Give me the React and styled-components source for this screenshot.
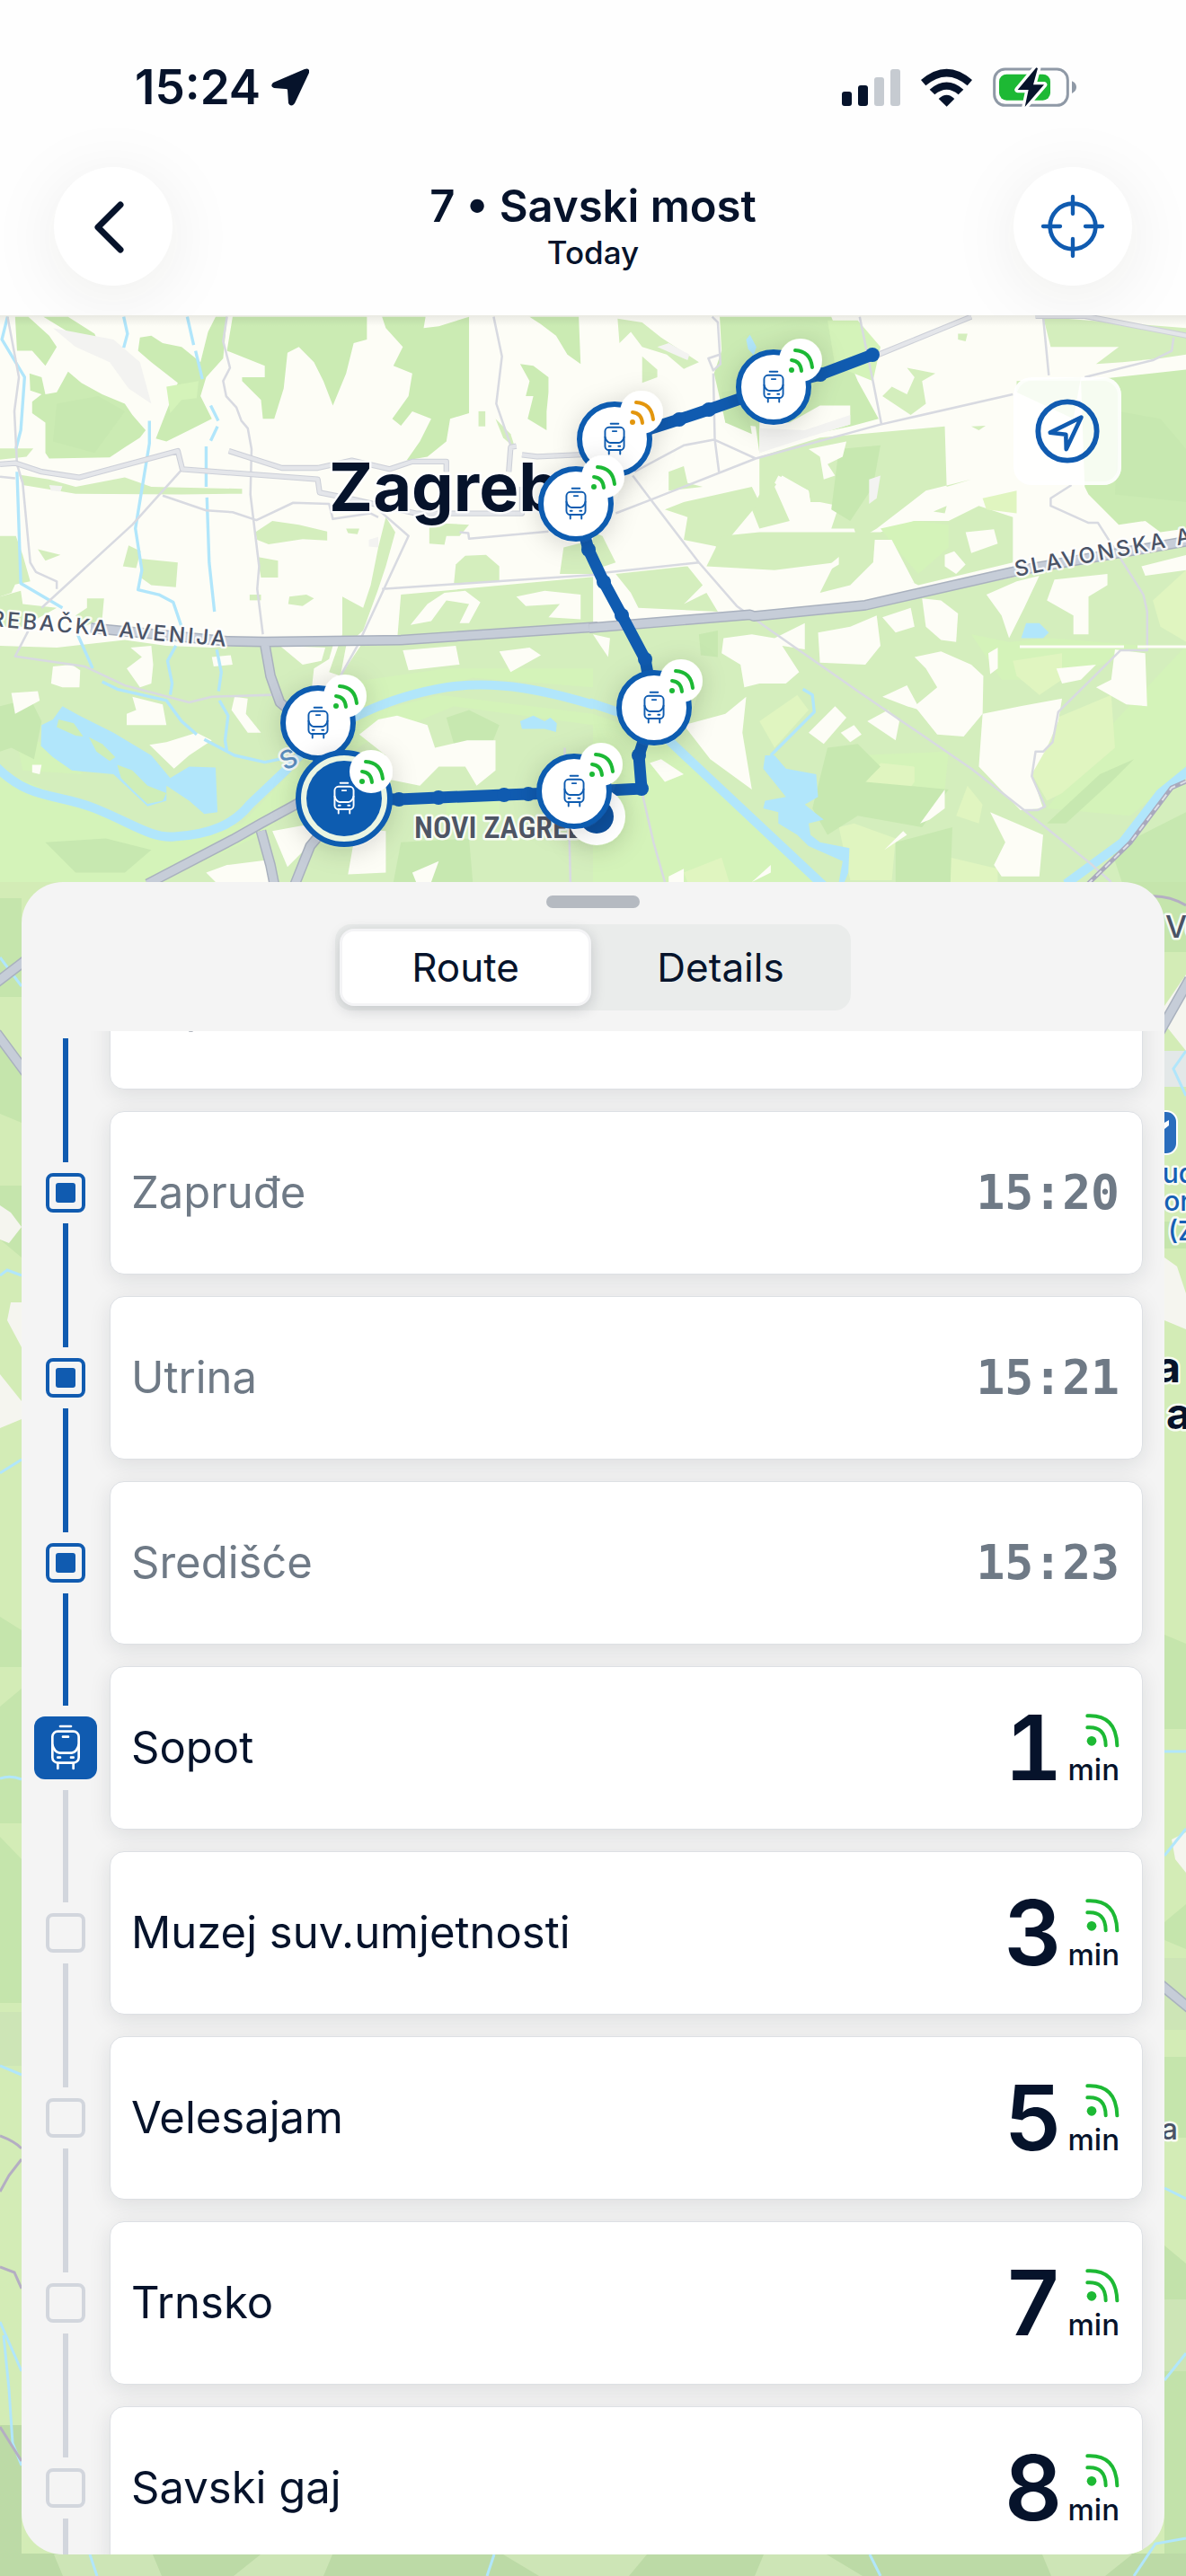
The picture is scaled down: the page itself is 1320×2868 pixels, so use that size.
import { useState } from "react";
import styled, { createGlobalStyle, css } from "styled-components";

const colors = {
  ink: "#06132b",
  muted: "#6f7a86",
  blue: "#105bb0",
  green: "#1db934",
  orange: "#e3960f",
  rail: "#d2d6dd",
  sheet: "#f4f4f4",
};

const stops = [
  { name: "Supilova", time: "15:19", state: "past" },
  { name: "Zapruđe", time: "15:20", state: "past" },
  { name: "Utrina", time: "15:21", state: "past" },
  { name: "Središće", time: "15:23", state: "past" },
  { name: "Sopot", minutes: 1, state: "current" },
  { name: "Muzej suv.umjetnosti", minutes: 3, state: "next" },
  { name: "Velesajam", minutes: 5, state: "next" },
  { name: "Trnsko", minutes: 7, state: "next" },
  { name: "Savski gaj", minutes: 8, state: "next" },
];

const trams = [
  { x: 861, y: 431, signal: colors.green },
  { x: 684, y: 489, signal: colors.orange },
  { x: 641, y: 561, signal: colors.green },
  { x: 728, y: 788, signal: colors.green },
  { x: 354, y: 805, signal: colors.green },
  { x: 639, y: 881, signal: colors.green },
  { x: 383, y: 889, signal: colors.green, selected: true },
];

const routePoints = [
  [971, 395], [913, 417], [861, 431], [789, 456], [756, 467], [684, 490],
  [641, 561], [655, 612], [672, 648], [692, 685], [718, 734], [728, 788],
  [711, 841], [714, 878], [639, 882], [588, 884], [561, 885], [488, 888],
  [444, 890], [383, 889], [355, 857], [354, 805],
];

// Terrain is split in two tiles, each drawn on its own 1568 unit grid
const westTile = {
  forest: [
    "40,30 75,30 130,80 150,110 120,160 85,120 45,120",
    "115,30 180,30 250,75 265,110 245,115 180,70",
    "180,175 215,205 270,235 330,260 350,290 385,330 370,350 330,375 290,402 130,405 120,390 120,310 85,285 85,255 110,235 80,225 78,180 110,190 120,235 150,230",
    "370,85 400,80 430,100 480,110 530,150 550,70 570,30 600,30 590,140 545,190 530,240 560,300 500,330 440,360 412,352 440,280 470,205 400,150 365,120",
    "615,30 970,30 970,90 935,100 915,180 880,265 855,200 830,150 790,110 760,125 750,220 725,300 695,300 690,250 640,200 640,190 700,190 700,160 600,120",
    "1010,30 1125,30 1120,60 1160,55 1240,30 1240,285 1190,300 1180,360 1130,400 1075,410 1110,360 1140,300 1090,280 1060,318 1037,300 1080,240 1090,180 1040,160 1065,110 1020,60",
    "1400,30 1530,30 1535,155 1500,130 1470,80 1430,50",
    "1375,155 1410,160 1450,190 1450,230 1445,280 1445,330 1395,300 1410,240 1390,240 1400,200",
  ],
  park: [
    "1265,280 1283,280 1283,320 1265,320",
    "1310,300 1350,340 1362,378 1330,350",
    "0,378 88,378 70,400 0,408",
    "50,448 130,460 200,480 330,455 400,480 640,485 640,498 480,500 200,498 60,475",
    "0,610 42,610 60,660 80,730 40,738 30,760 0,770",
    "370,670 470,680 465,745 400,740 372,720",
    "340,635 372,650 360,695 325,690",
    "100,645 160,660 120,675",
    "675,600 720,570 790,580 865,598 865,622 800,618 710,632 680,620",
    "915,590 950,590 945,605 920,602",
    "1020,560 1045,600 1020,690 1000,750 960,860 915,900 900,980 870,970 905,870 905,770 960,800 980,740 1000,640",
    "1135,575 1240,580 1215,610 1180,610 1175,633 1135,630",
    "1230,662 1285,660 1320,690 1320,730 1200,735 1205,685",
    "765,770 810,765 830,775 800,795 762,790",
    "680,665 735,675 735,720 690,720",
    "660,765 690,765 690,780 660,780",
    "230,775 275,775 270,830 220,850 200,820 230,800",
    "1490,640 1568,620 1568,710 1480,710",
    "0,770 55,755 60,790 150,800 60,850 0,850",
    "0,900 150,905 330,885 440,900 560,905 700,895 880,900 870,935 830,960 820,1050 870,1060 900,980 960,890 1568,845 1568,1568 0,1568",
    "1060,765 1568,718 1568,850 1050,885",
  ],
  meadow: [
    "0,1230 260,1340 450,1420 640,1370 900,1100 1160,1030 1568,1080 1568,1110 1200,1060 960,1160 690,1400 420,1525 0,1525",
    "900,1000 1180,960 1568,960 1568,1010 1250,985 960,1070",
    "40,1130 140,1170 220,1240 60,1230",
    "1180,1300 1320,1300 1320,1370 1180,1350",
    "440,215 525,200 520,245 480,250 450,285",
  ],
  grove: [
    "0,1060 80,1040 110,1100 90,1200 30,1170 0,1180",
    "1200,1160 1180,1090 1240,1070 1320,1110 1300,1160",
    "1060,1420 1240,1410 1250,1525 1040,1525",
    "120,1420 280,1410 400,1440 330,1500 200,1500",
    "150,260 260,240 330,280 250,390 140,360",
  ],
  clearing: [
    "140,955 190,950 212,965 210,1010 165,1010 135,1000",
    "345,905 400,900 405,950 400,1000 370,1010 335,960 375,930",
    "350,1035 430,1055 440,1110 335,1110 335,1080 360,1070",
    "395,1162 440,1155 520,1130 560,1150 500,1190 460,1225",
    "620,1035 655,1040 650,1080 690,1130 655,1130 612,1070",
    "30,1025 100,1020 105,1045 40,1080",
    "1065,912 1205,900 1215,950 1080,965",
    "1130,790 1175,760 1230,755 1270,785 1240,840 1215,840 1240,790 1180,780 1140,835 1085,845",
    "1365,770 1440,755 1535,765 1535,830 1450,825 1480,790 1390,795",
    "1320,915 1400,905 1430,925 1350,970",
    "950,1135 1000,1095 1050,1085 1130,1110 1150,1170 1235,1150 1310,1150 1310,1230 1260,1270 1230,1220 1160,1220 1110,1270 960,1240 1020,1190",
    "720,1390 830,1370 825,1420 760,1485",
    "545,1500 600,1480 720,1465 720,1525 570,1525",
    "890,1380 1020,1390 1020,1500 920,1505 935,1420",
    "1090,1500 1160,1470 1140,1525 1100,1525",
    "85,1215 110,1215 105,1240 85,1235",
    "560,930 610,925 615,950 565,955",
    "740,900 860,905 850,940 800,950",
  ],
  urban: [
    "140,60 300,90 370,150 400,260 340,220 290,150 200,110",
    "975,620 1000,612 1000,640 975,638",
    "130,475 165,478 160,492 135,490",
  ],
  water: [
    "165,1060 210,1085 300,1130 400,1190 450,1250 500,1220 570,1222 575,1340 540,1345 500,1310 440,1270 440,1310 390,1325 300,1240 190,1230 140,1195 108,1165 110,1110 140,1095",
    "1375,1100 1410,1085 1440,1100 1455,1090 1472,1105 1470,1128 1440,1120 1380,1120",
  ],
  island: [
    "155,1095 195,1105 220,1140 200,1138 150,1115",
    "235,1142 270,1160 305,1195 290,1205 255,1180",
    "310,1215 350,1230 390,1270 440,1290 430,1310 390,1318 350,1280 320,1250",
  ],
  streams:
    "M20,30L5,90L65,190L55,330L42,380M45,440L55,735L165,800M205,870L245,960M270,995L310,1015L440,1045L480,1100L520,1135M540,1148L620,1190L700,1208L740,1200M327,30L337,75L327,112M495,30L512,105M517,120L535,195M557,265L577,305M575,320L557,358M545,373V480M547,508L553,680L567,810M573,910L585,970L578,1020M580,1045L603,1085L595,1150L600,1180M395,305V365L358,590L375,700L365,752L420,765L458,785L480,850M465,900L443,940L455,1000L450,1030",
  rivers: "M-10,1220C80,1310 150,1290 250,1330C350,1370 400,1410 460,1405C560,1400 620,1370 660,1320L760,1225C850,1120 1000,1040 1180,1010C1320,990 1450,1020 1580,1060",
  lanes:
    "M20,30L50,190L38,280L45,420L60,470L80,680L95,705L150,730V750M480,435L350,580L110,800M600,30L590,95L608,165L590,200L598,240L625,270L638,305L655,325L665,380L662,500L685,690L680,750L695,870M430,503L545,542L615,547L678,568L775,522L870,525L880,565L980,550L1000,560M1305,30L1327,135L1312,260L1350,370M75,860L40,928L225,955L330,1005L500,1050L560,1035L720,1030M1000,540L1080,610L1015,750L945,900L900,980M1010,750L1580,712M1215,600L1238,602L1240,617L1450,598M0,453L40,457M1493,1170V1250M1505,1400L1508,1525",
  streets:
    "M0,420L40,417L110,440L210,455L470,385L482,433L840,460L845,495L920,510L1100,550L1380,550V480M605,385L745,430H840L930,410L1030,433L1090,413H1180V440M1380,395L1420,400L1580,393M1345,440L1350,375L1365,372",
  highways:
    "M240,853L600,888L700,890L1060,885L1580,850M700,895L715,980L740,1050L800,1100M390,1530L620,1410L690,1370L800,1310L850,1300M690,1390L715,1480L725,1530M780,1530L820,1430L870,1370",
};

const eastTile = {
  forest: [
    "335,30 630,30 700,200 755,300 680,320 560,345 440,390 430,320 350,310 320,180 340,120",
    "1290,200 1568,170 1568,590 1500,600 1460,570 1390,580 1310,500 1300,480",
  ],
  park: [
    "65,35 130,45 180,85 280,150 240,168 195,130 130,110 100,70 70,100",
    "130,135 170,170 170,190 130,205",
    "200,440 240,425 250,470 290,480 200,490",
    "1190,30 1568,60 1568,130 1500,140 1400,150 1330,155 1390,110 1210,110",
    "1120,200 1290,190 1270,300 1120,230",
    "790,215 830,235 850,190 830,165 905,180 870,200 880,260 840,290 765,240",
    "965,75 990,75 985,95 965,90",
    "1000,320 1038,318 1020,330",
    "440,400 600,350 930,320 935,480 1000,460 880,490 750,590 700,620 690,590 630,590 650,530 600,520 575,520 570,490 500,450 480,480 520,570 440,590 420,540 440,500",
    "190,540 240,520 330,500 420,480 440,520 340,640 240,620 250,560",
    "325,585 335,585 335,650 325,650",
    "340,610 440,600 640,600 760,600 850,570 940,570 1020,530 1110,560 1110,680 860,740 740,680 680,740 600,760 640,680 480,700 300,690",
    "900,545 935,530 930,550",
    "60,710 250,690 290,740 240,790 300,760 330,810 120,800 100,760",
    "0,860 400,825 740,795 1568,625 1568,1568 0,1568",
    "0,600 25,610 60,680 0,700",
  ],
  meadow: [
    "0,1080 200,1150 600,1530 0,1530",
    "620,40 700,40 760,110 740,200 640,160",
    "760,590 850,570 940,580 940,640 860,710 800,640",
    "1000,870 1100,890 1210,880 1460,900 1460,910 1230,990 1080,990",
    "1380,1100 1568,900 1568,1230 1420,1350 1200,1330",
    "600,1240 700,1190 940,1180 930,1280 720,1260",
  ],
  hay: [
    "1110,940 1240,920 1240,990 1180,1030 1120,980",
    "1180,1110 1370,1030 1380,1170 1240,1290 1200,1310 1160,1240",
    "1480,780 1568,700 1568,890 1500,850",
    "440,1100 540,1030 570,1070 480,1170",
    "760,1210 850,1220 850,1260 800,1330 700,1290",
    "650,1380 690,1370 800,1410 790,1520 680,1520",
    "1030,510 1120,490 1120,550 1040,540",
    "990,1270 1030,1320 1020,1370 960,1350",
    "240,1500 340,1460 360,1525 250,1525",
    "945,1460 1070,1490 1070,1525 945,1525",
  ],
  grove: [
    "650,380 760,370 740,480 680,570 630,540",
    "1390,280 1500,300 1568,380 1568,520 1380,500",
    "280,870 330,860 330,930 285,925",
    "620,1170 700,1160 760,1220 720,1260 940,1280 870,1380 700,1350 620,1400 580,1330",
    "1200,1370 1340,1240 1430,1200 1370,1260 1250,1370",
    "1370,1440 1568,1340 1568,1568 1400,1530",
    "800,1420 950,1380 945,1525 800,1525",
    "340,230 400,220 420,340 350,310",
  ],
  clearing: [
    "440,305 520,310 600,265 680,265 680,315 580,345 440,390",
    "570,380 670,360 660,400 620,420 640,450 610,460 600,400",
    "490,450 570,490 575,525 550,520 480,470",
    "595,865 680,850 750,820 760,900 720,950 600,945",
    "765,825 840,800 850,850 800,865",
    "870,775 920,780 965,815 960,890 920,885 880,850",
    "850,930 920,915 1000,950 1032,980 1030,1080 980,1140 910,1135 850,1060 910,1010 880,960",
    "1040,765 1120,730 1180,715 1140,800 1100,880 1080,820",
    "1220,725 1360,710 1360,740 1310,770 1310,870 1270,870 1270,820 1200,780",
    "1380,910 1460,920 1465,1060 1410,1055 1330,1010 1370,990",
    "1030,1080 1130,1060 1240,1040 1230,1100 1200,1170 1160,1240 1190,1330 1130,1335 1020,1220",
    "345,880 420,870 480,880 560,840 560,910 500,900 545,970 510,1000 440,1000 400,1010 390,950 340,920",
    "240,1110 350,1080 405,1035 395,1130 420,1280 310,1200",
    "570,1130 640,1060 670,1090 610,1160",
    "655,1130 690,1110 710,1135 680,1155",
    "765,1035 830,1005 865,1070 830,1060",
    "725,1100 780,1070 810,1100 800,1150",
    "1050,1340 1190,1400 1180,1510 1080,1510 1060,1480 1090,1420",
    "865,1370 930,1280 930,1330 890,1360",
    "770,1440 820,1390 830,1400",
    "150,1210 180,1200 240,1240 190,1260",
    "200,1510 240,1490 240,1525 200,1525",
    "740,690 745,620 790,620 850,735 800,715",
    "930,660 955,650 985,685 960,710 930,690",
    "985,600 1060,592 1070,630 1000,655",
    "620,690 650,665 650,685 625,700",
    "1225,960 1330,950 1290,990 1240,1000",
    "1045,920 1070,905 1070,960 1050,975",
    "1450,690 1568,660 1568,700 1460,715",
    "0,870 45,880 40,930 20,900",
    "420,1525 470,1480 470,1500",
  ],
  urban: [
    "170,110 200,100 255,130 250,145",
    "440,325 560,330 680,290 680,315 580,345 440,390",
    "730,460 760,450 750,510 730,525",
  ],
  water: [
    "480,1190 510,1225 590,1240 595,1300 560,1320 585,1340 610,1360 570,1370 575,1400 600,1420 678,1435 675,1500 665,1525 650,1525 660,1470 570,1430 540,1400 490,1370 490,1340 450,1330 455,1310 510,1300 450,1225 455,1190",
    "1145,840 1180,840 1205,865 1190,880 1132,880",
    "405,90 415,78 432,110 425,132 410,115",
  ],
  island: [],
  streams: "M555,1015L580,1030L585,1075L470,1190",
  rivers: "M-10,1050L80,1080M200,1150L610,1535M1250,1530L1400,1420L1500,1290L1580,1225",
  lanes:
    "M705,30L740,200L762,312M60,550L150,515L430,405L760,315L1110,235M110,440L240,370L320,355L430,405M315,30L330,45L337,155L318,172L305,140L335,130M318,180L322,355L333,440M105,450L150,510L280,680L380,795L470,860L700,1020L1000,1225L1140,1335L1320,1480L1370,1525M0,710L280,680M130,1290L160,1420L190,1525M1190,30L1205,185M1535,85L1530,120L1480,145L1300,190M1265,475L1210,510V530L1310,575H1335L1455,765L1465,810V912H1395L1230,1075L1215,1155L1190,1180H1170L1160,1245L1195,1325L1175,1335H1140",
  streets: "M755,130L1000,30M1170,28H1300L1580,82",
  highways: "M-10,853L415,818L425,822L720,793L1130,700L1580,622",
};

const GlobalStyle = createGlobalStyle`
  *, *::before, *::after {
    box-sizing: border-box;
  }
  body {
    margin: 0;
    color: ${colors.ink};
    font-family: Inter, "Liberation Sans", sans-serif;
  }
  button {
    border: 0;
    padding: 0;
    color: inherit;
    font: inherit;
    cursor: pointer;
  }
`;

/* ---------- icons ---------- */

const LocationArrow = () => (
  <svg width="42" height="42" viewBox="303 77 42 42" aria-hidden="true">
    <path
      d="M340 78Q346 76 345 82L329 116Q325 121 322 116L321 101Q321 100 319 100L306 99Q301 97 305 93Z"
      fill={colors.ink}
    />
  </svg>
);

const SignalBars = () => (
  <svg width="65" height="41" viewBox="111 78 195 123" aria-hidden="true">
    <rect x="111" y="153" width="33" height="48" rx="9" fill={colors.ink} />
    <rect x="165" y="132" width="33" height="69" rx="9" fill={colors.ink} />
    <rect x="219" y="105" width="33" height="96" rx="9" fill="#c6cbd1" />
    <rect x="273" y="78" width="33" height="123" rx="9" fill="#c6cbd1" />
  </svg>
);

const Wifi = () => (
  <svg width="57" height="45" viewBox="375 70 171 135" fill={colors.ink} aria-hidden="true">
    <path d="M375 112Q461 38 546 112L530 131Q461 72 391 131Z" />
    <path d="M404 144Q461 95 517 144L500 161Q461 128 421 161Z" />
    <path d="M434 175Q461 149 487 175L461 201Z" />
  </svg>
);

const Battery = () => (
  <svg width="93" height="46" viewBox="615 70 279 138" aria-hidden="true">
    <rect x="620" y="79" width="245" height="121" rx="36" fill="none" stroke="#8f99a6" strokeWidth="9" />
    <rect x="636" y="96" width="171" height="87" rx="25" fill={colors.green} />
    <path d="M879 119Q894 126 894 139T879 160Z" fill="#8f99a6" />
    <path
      d="M760 74L698 148H734L722 205L786 131H750L765 76Z"
      fill={colors.ink}
      stroke="#fff"
      strokeWidth="20"
      strokeLinejoin="round"
      paintOrder="stroke"
    />
  </svg>
);

const Chevron = () => (
  <svg width="72" height="72" viewBox="90 216 72 72" aria-hidden="true">
    <path d="M134 228L109 253L134 278" fill="none" stroke={colors.ink} strokeWidth="7" strokeLinecap="round" strokeLinejoin="round" />
  </svg>
);

const Crosshair = () => (
  <svg width="74" height="74" viewBox="-111 -111 222 222" fill="none" stroke={colors.blue} aria-hidden="true">
    <circle r="76" strokeWidth="14" />
    <path d="M0-99V-42M0 99V42M-99 0H-42M99 0H42" strokeWidth="13" strokeLinecap="round" />
  </svg>
);

const Compass = () => (
  <svg width="72" height="72" viewBox="-86 -86 172 172" fill="none" stroke={colors.blue} aria-hidden="true">
    <circle r="78" strokeWidth="14" />
    <path d="M37-37L-46 4L-4 9L-3 48Z" strokeWidth="11" strokeLinejoin="round" />
  </svg>
);

const TramShape = () => (
  <g fill="none" strokeWidth="8" strokeLinecap="round" strokeLinejoin="round">
    <path d="M-18-72H18" />
    <rect x="-44" y="-55" width="88" height="105" rx="18" />
    <path d="M-9-37H9M-26 32H-18M18 32H26M-26 52V69M26 52V69" />
    <path d="M-44-10Q-38 14-20 17H20Q38 14 44-10" />
  </g>
);

const Signal = () => (
  <svg width="38" height="38" viewBox="505 268 114 114" fill="none" stroke={colors.green} strokeWidth="12" strokeLinecap="round" aria-hidden="true">
    <circle cx="526" cy="359" r="16" fill={colors.green} stroke="none" />
    <path d="M512 314Q572 309 573 374M512 275Q608 270 611 374" />
  </svg>
);

/* ---------- map ---------- */

const MapSvg = styled.svg`
  position: absolute;
  inset: 0;
  width: 100%;
  height: 100%;
  background: #cfeab4;
  font-family: Inter, "Liberation Sans", sans-serif;
`;

const MapLabel = styled.text`
  fill: ${({ $color }) => $color || "#4a5366"};
  font-size: ${({ $size }) => $size}px;
  font-weight: ${({ $weight }) => $weight || 500};
  letter-spacing: ${({ $tracked }) => ($tracked ? "3px" : "normal")};
  stroke: rgba(255, 255, 255, 0.85);
  stroke-width: 5px;
  stroke-linejoin: round;
  paint-order: stroke;
`;

const DistrictLabel = styled(MapLabel)`
  font-family: "Liberation Sans Narrow", "Roboto Condensed", Roboto, sans-serif;
`;

const Patches = ({ shapes, fill }) => (
  <g fill={fill}>
    {shapes.map((points) => (
      <polygon key={points} points={points} />
    ))}
  </g>
);

const Tile = ({ tile, x }) => (
  <g transform={`translate(${x} 340) scale(0.421)`} fill="none" strokeLinejoin="round">
    <Patches shapes={tile.park} fill="#d4eebd" />
    <Patches shapes={tile.forest} fill="#cbebb3" />
    <Patches shapes={tile.meadow} fill="#d4f3b9" />
    <Patches shapes={tile.hay || []} fill="#e0f5c0" />
    <Patches shapes={tile.grove} fill="#c7e8b0" />
    <Patches shapes={tile.clearing} fill="#fdfdf6" />
    <Patches shapes={tile.urban} fill="#f3f3f1" />
    <Patches shapes={tile.water} fill="#b1e6fb" />
    <Patches shapes={tile.island} fill="#cfeeb8" />
    <path d={tile.rivers} stroke="#b1e6fb" strokeWidth="24" />
    <path d={tile.streams} stroke="#b1e6fb" strokeWidth="8" />
    <path d={tile.lanes} stroke="#d8dae1" strokeWidth="6" />
    <path d={tile.streets} stroke="#cdd0d8" strokeWidth="15" />
    <path d={tile.streets} stroke="#e4e6ea" strokeWidth="10" />
    <path d={tile.highways} stroke="#a9b1be" strokeWidth="28" />
    <path d={tile.highways} stroke="#c6cdd8" strokeWidth="21" />
  </g>
);

const Surroundings = () => (
  <g fill="none">
    <rect y="982" width="1320" height="1886" fill="#d3ecb6" />
    <g fill="#c5e5ac">
      <path d="M0 1000H24V1110H0ZM0 1160L24 1180V1250L0 1240ZM0 1320H24V1400L0 1380ZM0 1800L24 1815V1856H0ZM0 1900L24 1880V2030H0ZM0 2045L24 2070V2230H0Z" />
      <path d="M1250 982H1320V1060H1296ZM1296 1360H1320V1390H1296ZM1296 1820L1320 1830V1925H1296ZM1296 2140L1320 2120V2170L1296 2160ZM1296 2290H1320V2380H1296Z" />
    </g>
    <path d="M0 2300H24V2868H1320V2520L1296 2500V2843H24V2300" fill="#c2e2aa" />
    <path d="M24 2843H1320V2868H0V2700H24Z" fill="#bcdaa6" />
    <g fill="#cde5b6">
      <path d="M60 2844H170L180 2868H70ZM290 2844H370L360 2868H260ZM560 2844H720L700 2868H600ZM850 2844H920L960 2868H840ZM1160 2844H1260L1230 2868H1170Z" />
      <path d="M0 2240H24V2300H0ZM1296 2560H1320V2640H1296ZM1296 2180H1320V2260H1296Z" />
    </g>
    <g fill="#f5f5ef">
      <path d="M0 1342L12 1350L24 1366L10 1384L0 1380ZM12 1450H24V1500L8 1470ZM0 1530L24 1560V1580L0 1590ZM1296 1120L1320 1085V1170L1296 1140ZM1296 1400L1310 1410L1320 1440V1480L1296 1470ZM1304 2048L1320 2040V2085L1308 2070Z" />
      <path d="M1296 1170H1320V1210H1296Z" fill="#e3e8e8" />
    </g>
    <g stroke="#b1e6fb" strokeWidth="3">
      <path d="M0 1066L24 1098M0 1420L8 1414L24 1420M0 1640L24 1625M0 1980Q12 1976 24 1981M0 2300L24 2310M4 2600L10 2660L14 2720L24 2745M0 2585L24 2640M100 2844L108 2868M550 2844L542 2868M968 2844L980 2868M1262 2868L1286 2832L1320 2826M1320 2620L1296 2650M1296 1950H1320M1296 2066L1320 2036M1296 2436L1320 2448M1320 1170L1306 1190L1320 1220" />
    </g>
    <g stroke="#a9b1be" strokeWidth="12">
      <path d="M-4 1094L30 1068M-4 1150L30 1196M1290 1150L1324 1090M1290 2208L1324 2236" />
    </g>
    <g stroke="#c6cdd8" strokeWidth="9">
      <path d="M-4 1094L30 1068M-4 1150L30 1196M1290 1150L1324 1090M1290 2208L1324 2236" />
    </g>
    <g stroke="#b4aec3" strokeWidth="3">
      <path d="M0 2378Q16 2384 24 2392M0 2440L10 2422L24 2404M0 2524L16 2530L24 2548M0 2702L24 2740M1278 998Q1300 996 1320 1008" />
    </g>
    <rect x="1270" y="1237" width="40" height="48" rx="12" fill="#2a6dbd" stroke="#fff" strokeWidth="2" />
    <path d="M1296 1250L1301 1247V1253L1296 1257Z" fill="#fff" />
  </g>
);

const TramPin = ({ x, y, signal, selected }) => (
  <g transform={`translate(${x} ${y})`}>
    {selected && <circle r="51" fill="#eaf5e2" stroke={colors.blue} strokeWidth="6" />}
    <circle
      r={selected ? 42 : 39}
      fill={selected ? colors.blue : "#fff"}
      stroke={colors.blue}
      strokeWidth={selected ? 0 : 6}
    />
    <g transform="scale(0.24)" stroke={selected ? "#fff" : colors.blue}>
      <TramShape />
    </g>
    <g transform="translate(30 -30)">
      <circle r="24" fill="#fff" />
      <circle cx="-10" cy="11" r="3" fill={signal} />
      <path
        d="M-10 0Q0 1 1 12M-6-11Q11-10 13 8"
        fill="none"
        stroke={signal}
        strokeWidth="4"
        strokeLinecap="round"
      />
    </g>
  </g>
);

const RouteMap = () => (
  <MapSvg viewBox="0 351 1320 2517" preserveAspectRatio="xMidYMin slice" role="img" aria-label="Map of Zagreb with tram line 7">
    <defs>
      <linearGradient id="headerShade" x1="0" y1="0" x2="0" y2="1">
        <stop offset="0" stopColor="#000" stopOpacity="0.08" />
        <stop offset="1" stopColor="#000" stopOpacity="0" />
      </linearGradient>
      <filter id="pinShadow" x="-50%" y="-50%" width="200%" height="200%">
        <feDropShadow dx="0" dy="4" stdDeviation="14" floodColor="#223" floodOpacity="0.16" />
      </filter>
    </defs>
    <rect y="340" width="1320" height="660" fill="#fdfdf6" />
    <Tile tile={westTile} x={0} />
    <Tile tile={eastTile} x={660} />
    <path d="M1135 720H1251M1266 720H1320" stroke="#fdfdf6" strokeWidth="3" />
    <path d="M1210 985L1258 938L1304 877L1320 870" fill="none" stroke="#a9a9bd" strokeWidth="5" />
    <path d="M1210 985L1258 938L1304 877L1320 870" fill="none" stroke="#dcdfe6" strokeWidth="2" strokeDasharray="8 6" />
    <Surroundings />
    <rect y="351" width="1320" height="12" fill="url(#headerShade)" />

    <MapLabel x="366" y="569" $size={74} $weight={700} $color={colors.ink}>
      Zagreb
    </MapLabel>
    <MapLabel $size={24} $tracked textAnchor="end" transform="translate(254 720) rotate(5)">
      REBAČKA AVENIJA
    </MapLabel>
    <MapLabel $size={24} $tracked transform="translate(1131 642) rotate(-11)">
      SLAVONSKA A
    </MapLabel>
    <DistrictLabel x="461" y="933" $size={34} $weight={600} $color="#4e5564">
      NOVI ZAGREB
    </DistrictLabel>
    <MapLabel $size={28} $color="#5c90c2" transform="translate(317 858) rotate(-25)">
      S
    </MapLabel>
    <MapLabel x="1297" y="1044" $size={34}>Ve</MapLabel>
    <MapLabel x="1312" y="1317" $size={30} $color="#1560b5" textAnchor="middle">ud</MapLabel>
    <MapLabel x="1310" y="1348" $size={30} $color="#1560b5" textAnchor="middle">or</MapLabel>
    <MapLabel x="1300" y="1381" $size={30} $color="#1560b5">(Z</MapLabel>
    <MapLabel x="1314" y="1539" $size={48} $weight={700} $color={colors.ink} textAnchor="end">a</MapLabel>
    <MapLabel x="1298" y="1591" $size={48} $weight={700} $color={colors.ink}>a</MapLabel>
    <MapLabel x="1311" y="2382" $size={32} textAnchor="end">a</MapLabel>

    <polyline
      points={routePoints.join(" ")}
      fill="none"
      stroke={colors.blue}
      strokeWidth="13"
      strokeLinecap="round"
      strokeLinejoin="round"
    />
    <g fill={colors.blue}>
      {routePoints.map(([x, y]) => (
        <circle key={`${x}-${y}`} cx={x} cy={y} r="8" />
      ))}
    </g>
    <g filter="url(#pinShadow)">
      <circle cx="664" cy="909" r="32" fill="#fff" />
      <circle cx="664" cy="909" r="19" fill="#0f4f9c" />
    </g>
    {trams.map((tram) => (
      <g key={`${tram.x}-${tram.y}`} filter="url(#pinShadow)">
        <TramPin {...tram} />
      </g>
    ))}
  </MapSvg>
);

/* ---------- layout ---------- */

const Screen = styled.div`
  display: flex;
  flex-direction: column;
  height: 100vh;
  overflow: hidden;
`;

const Header = styled.header`
  flex: none;
  padding-bottom: 33px;
  background: #fefefe;
`;

const StatusBar = styled.div`
  display: flex;
  align-items: center;
  justify-content: space-between;
  height: 58px;
  margin: 68px 122px 60px 150px;
`;

const StatusGroup = styled.div`
  display: flex;
  align-items: center;
  gap: ${({ $gap }) => $gap}px;
`;

const Clock = styled.time`
  font-size: 53px;
  font-weight: 600;
  line-height: 60px;
`;

const NavBar = styled.div`
  display: flex;
  align-items: center;
  justify-content: space-between;
  padding: 0 60px;
`;

const RoundButton = styled.button`
  display: grid;
  place-items: center;
  width: 132px;
  height: 132px;
  border-radius: 50%;
  background: #fff;
  box-shadow: 0 12px 80px rgba(40, 40, 30, 0.08);
`;

const Heading = styled.div`
  text-align: center;
`;

const Title = styled.h1`
  margin: 0;
  font-size: 49px;
  font-weight: 600;
  line-height: 58px;
`;

const Subtitle = styled.p`
  margin: 0;
  font-size: 35px;
  font-weight: 500;
  line-height: 44px;
`;

const Stage = styled.main`
  position: relative;
  flex: 1;
  min-height: 0;
`;

const Overlay = styled.div`
  position: relative;
  display: flex;
  flex-direction: column;
  height: 100%;
  padding: 69px 24px 24px;
`;

const LocateButton = styled.button`
  display: grid;
  flex: none;
  place-items: center;
  align-self: flex-end;
  width: 120px;
  height: 120px;
  margin-right: 48px;
  border-radius: 20px;
  background: rgba(255, 255, 255, 0.82);
  box-shadow: inset 0 0 0 4px rgba(255, 255, 255, 0.6);
`;

const Sheet = styled.section`
  display: flex;
  flex: 1;
  flex-direction: column;
  min-height: 0;
  margin-top: 442px;
  overflow: hidden;
  border-radius: 46px;
  background: ${colors.sheet};
`;

const SheetTop = styled.div`
  display: flex;
  flex: none;
  flex-direction: column;
  align-items: center;
  gap: 18px;
  height: 166px;
  padding-top: 15px;
`;

const Grabber = styled.div`
  width: 104px;
  height: 14px;
  border-radius: 7px;
  background: #b5bac1;
`;

const Tabs = styled.div`
  display: grid;
  grid-template-columns: 1fr 1fr;
  gap: 4px;
  width: 574px;
  height: 96px;
  padding: 5px;
  border-radius: 18px;
  background: #eaeceb;
`;

const Tab = styled.button`
  border-radius: 16px;
  background: transparent;
  font-size: 44px;
  line-height: 56px;

  ${({ $active }) =>
    $active &&
    css`
      border: 3px solid #f4f4f6;
      background: #fff;
      box-shadow: 0 4px 16px rgba(20, 25, 45, 0.18);
    `}
`;

const StopsViewport = styled.div`
  flex: 1;
  min-height: 0;
  overflow: hidden;
`;

/* the list is scrolled so that the first stop is mostly out of view */
const Stops = styled.ul`
  margin: -129px 0 0;
  padding: 0;
  list-style: none;
`;

const Stop = styled.li`
  display: flex;
  height: 206px;
  padding-right: 24px;
`;

const Rail = styled.div`
  display: flex;
  flex: none;
  flex-direction: column;
  align-items: center;
  gap: 12px;
  width: 98px;
`;

const RailLine = styled.span`
  flex: 1;
  width: 6px;
  background: ${({ $done }) => ($done ? colors.blue : colors.rail)};
`;

const StopMark = styled.span`
  display: grid;
  place-items: center;
  width: 44px;
  height: 44px;
  border: 4px solid ${({ $done }) => ($done ? colors.blue : colors.rail)};
  border-radius: 8px;

  &::after {
    content: "";
    width: 22px;
    height: 22px;
    border-radius: 3px;
    background: ${({ $done }) => ($done ? colors.blue : "transparent")};
  }
`;

const TramMark = styled.span`
  display: grid;
  place-items: center;
  width: 70px;
  height: 70px;
  border-radius: 12px;
  background: ${colors.blue};
`;

const StopCard = styled.div`
  display: flex;
  flex: 1;
  align-items: center;
  justify-content: space-between;
  min-width: 0;
  margin: 12px 0;
  padding: 0 25px 0 23px;
  border: 1px solid #dde0e4;
  border-radius: 16px;
  background: #fff;
  box-shadow: 0 6px 24px rgba(20, 30, 35, 0.1);
  color: ${({ $past }) => ($past ? colors.muted : colors.ink)};
`;

const StopName = styled.span`
  font-size: 49px;
  line-height: 60px;
`;

const PastTime = styled.time`
  font-family: "DejaVu Sans Mono", "Liberation Mono", monospace;
  font-size: 53px;
  font-weight: 700;
  line-height: 60px;
`;

const Countdown = styled.span`
  display: flex;
  align-items: flex-end;
  gap: 6px;
`;

const Minutes = styled.span`
  font-size: 100px;
  font-weight: 600;
  font-variant-numeric: tabular-nums;
  line-height: 100px;
`;

const Unit = styled.span`
  display: flex;
  flex-direction: column;
  align-items: flex-end;
  gap: 2px;
  padding-bottom: 4px;
  font-size: 33px;
  font-weight: 500;
  line-height: 44px;
`;

const StopRow = ({ stop }) => {
  const past = stop.state === "past";
  const current = stop.state === "current";

  return (
    <Stop aria-current={current ? "step" : undefined}>
      <Rail aria-hidden="true">
        <RailLine $done={past || current} />
        {current ? (
          <TramMark>
            <svg width="54" height="54" viewBox="-81 -81 162 162" stroke="#fff">
              <TramShape />
            </svg>
          </TramMark>
        ) : (
          <StopMark $done={past} />
        )}
        <RailLine $done={past} />
      </Rail>
      <StopCard $past={past}>
        <StopName>{stop.name}</StopName>
        {past ? (
          <PastTime>{stop.time}</PastTime>
        ) : (
          <Countdown>
            <Minutes>{stop.minutes}</Minutes>
            <Unit>
              <Signal />
              min
            </Unit>
          </Countdown>
        )}
      </StopCard>
    </Stop>
  );
};

const App = () => {
  const [tab, setTab] = useState("Route");

  return (
    <>
      <GlobalStyle />
      <Screen>
        <Header>
          <StatusBar>
            <StatusGroup $gap={12}>
              <Clock>15:24</Clock>
              <LocationArrow />
            </StatusGroup>
            <StatusGroup $gap={23}>
              <SignalBars />
              <Wifi />
              <Battery />
            </StatusGroup>
          </StatusBar>
          <NavBar>
            <RoundButton aria-label="Back">
              <Chevron />
            </RoundButton>
            <Heading>
              <Title>7 • Savski most</Title>
              <Subtitle>Today</Subtitle>
            </Heading>
            <RoundButton aria-label="Center on vehicle">
              <Crosshair />
            </RoundButton>
          </NavBar>
        </Header>
        <Stage>
          <RouteMap />
          <Overlay>
            <LocateButton aria-label="My location">
              <Compass />
            </LocateButton>
            <Sheet>
              <SheetTop>
                <Grabber />
                <Tabs role="tablist">
                  {["Route", "Details"].map((name) => (
                    <Tab
                      key={name}
                      role="tab"
                      aria-selected={tab === name}
                      $active={tab === name}
                      onClick={() => setTab(name)}
                    >
                      {name}
                    </Tab>
                  ))}
                </Tabs>
              </SheetTop>
              <StopsViewport>
                <Stops>
                  {stops.map((stop) => (
                    <StopRow key={stop.name} stop={stop} />
                  ))}
                </Stops>
              </StopsViewport>
            </Sheet>
          </Overlay>
        </Stage>
      </Screen>
    </>
  );
};

export default App;
